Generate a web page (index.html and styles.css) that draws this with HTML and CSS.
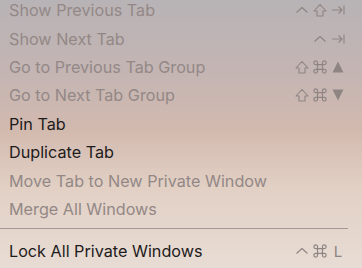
FILE: index.html
```html
<!DOCTYPE html>
<html lang="en">
<head>
    <meta charset="UTF-8">
    <title>Tab Menu</title>
    <link rel="stylesheet" href="styles.css">
</head>
<body>
    <ul class="menu">
        <li class="item disabled">
            <span>Show Previous Tab</span>
            <span class="keys">
                <svg viewBox="0 0 14 14"><polyline points="1.5,9.5 7,4.5 12.5,9.5"/></svg>
                <svg viewBox="0 0 14 14"><path d="M7 1.5 L13 8 H10 V13 H4 V8 H1 Z"/></svg>
                <svg viewBox="0 0 14 14"><path d="M1 7 H11 M7.5 3.5 L11 7 L7.5 10.5 M13 2.5 V11.5"/></svg>
            </span>
        </li>
        <li class="item disabled">
            <span>Show Next Tab</span>
            <span class="keys">
                <svg viewBox="0 0 14 14"><polyline points="1.5,9.5 7,4.5 12.5,9.5"/></svg>
                <svg viewBox="0 0 14 14"><path d="M1 7 H11 M7.5 3.5 L11 7 L7.5 10.5 M13 2.5 V11.5"/></svg>
            </span>
        </li>
        <li class="item disabled">
            <span>Go to Previous Tab Group</span>
            <span class="keys">
                <svg viewBox="0 0 14 14"><path d="M7 1.5 L13 8 H10 V13 H4 V8 H1 Z"/></svg>
                <svg class="cmd" viewBox="1.3 1.3 11.4 11.4"><path d="M5 5V3.5A1.5 1.5 0 1 0 3.5 5H10.5A1.5 1.5 0 1 0 9 3.5V10.5A1.5 1.5 0 1 0 10.5 9H3.5A1.5 1.5 0 1 0 5 10.5Z"/></svg>
                <svg viewBox="0 0 14 14"><polygon class="fill" points="7,1.5 12.5,12.5 1.5,12.5"/></svg>
            </span>
        </li>
        <li class="item disabled">
            <span>Go to Next Tab Group</span>
            <span class="keys">
                <svg viewBox="0 0 14 14"><path d="M7 1.5 L13 8 H10 V13 H4 V8 H1 Z"/></svg>
                <svg class="cmd" viewBox="1.3 1.3 11.4 11.4"><path d="M5 5V3.5A1.5 1.5 0 1 0 3.5 5H10.5A1.5 1.5 0 1 0 9 3.5V10.5A1.5 1.5 0 1 0 10.5 9H3.5A1.5 1.5 0 1 0 5 10.5Z"/></svg>
                <svg viewBox="0 0 14 14"><polygon class="fill" points="1.5,1.5 12.5,1.5 7,12.5"/></svg>
            </span>
        </li>
        <li class="item"><span>Pin Tab</span></li>
        <li class="item"><span>Duplicate Tab</span></li>
        <li class="item disabled"><span>Move Tab to New Private Window</span></li>
        <li class="item disabled"><span>Merge All Windows</span></li>
        <li class="separator"></li>
        <li class="item">
            <span>Lock All Private Windows</span>
            <span class="keys">
                <svg viewBox="0 0 14 14"><polyline points="1.5,9.5 7,4.5 12.5,9.5"/></svg>
                <svg class="cmd" viewBox="1.3 1.3 11.4 11.4"><path d="M5 5V3.5A1.5 1.5 0 1 0 3.5 5H10.5A1.5 1.5 0 1 0 9 3.5V10.5A1.5 1.5 0 1 0 10.5 9H3.5A1.5 1.5 0 1 0 5 10.5Z"/></svg>
                <span class="letter">L</span>
            </span>
        </li>
    </ul>
</body>
</html>
```

FILE: styles.css
```css
html, body {
    margin: 0;
    height: 100%;
}
body {
    background: linear-gradient(180deg, #b8b3b6 0%, #c4b5b3 28%, #d2b9ae 48%, #e2d0c5 70%, #e7dcd4 100%);
    font-family: 'Inter', 'Noto Sans', sans-serif;
    overflow: hidden;
}
.menu {
    list-style: none;
    margin: -4px 0 0 0;
    padding: 0;
}
.item {
    display: flex;
    justify-content: space-between;
    align-items: center;
    height: 28.4px;
    padding: 0 17px 0 9px;
    font-size: 16.2px;
    color: #1e1b1b;
}
.item.disabled {
    color: #938886;
}
.keys {
    display: flex;
    align-items: center;
    gap: 4px;
}
.keys svg {
    width: 14px;
    height: 14px;
    fill: none;
    stroke: #8e8583;
    stroke-width: 1.1;
    stroke-linejoin: round;
}
.keys svg.cmd {
    stroke-width: 0.95;
}
.keys svg .fill {
    fill: #8e8583;
    stroke: none;
}
.letter {
    width: 14px;
    font-size: 15px;
    color: #8e8583;
    text-align: center;
}
.separator {
    height: 1px;
    margin: 5px 14px 8px 0;
    background-color: #a39893;
}
```
